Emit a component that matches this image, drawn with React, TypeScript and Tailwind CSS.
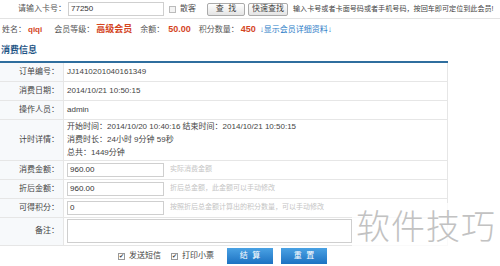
import React from "react";

const font = {
  fontFamily: '"Liberation Sans", "Noto Sans CJK SC", sans-serif',
};

function Row({
  label,
  children,
  h = "h-[19px]",
}: {
  label: string;
  children: React.ReactNode;
  h?: string;
}) {
  return (
    <div className={`flex border-b border-[#e6e6e6] ${h}`}>
      <div className="w-[64px] shrink-0 flex items-center justify-end pr-[4px] bg-[#f7f9fb] border-r border-[#e6e6e6] text-[#444] whitespace-nowrap">
        {label}
      </div>
      <div className="flex-1 flex items-center pl-[3px] text-[#444] whitespace-nowrap">
        {children}
      </div>
    </div>
  );
}

function Field({ value, hint }: { value: string; hint: string }) {
  return (
    <>
      <div className="w-[97px] h-[14px] border border-[#cfcfcf] bg-white flex items-center px-[2px] text-[#333]">
        {value}
      </div>
      <span className="ml-[6px] text-[7px] text-[#c4c4c4]">{hint}</span>
    </>
  );
}

export default function App() {
  return (
    <div
      className="relative w-[500px] h-[266px] bg-white overflow-hidden text-[8px]"
      style={font}
    >
      {/* search bar */}
      <div className="flex items-center h-[19px] border-b border-[#e3e3e3] pl-[18px] whitespace-nowrap">
        <span className="shrink-0 text-[#555]">请输入卡号：</span>
        <div className="shrink-0 ml-[2px] w-[96px] h-[14px] border border-[#cfcfcf] flex items-center px-[2px] text-[#333]">
          77250
        </div>
        <span className="shrink-0 ml-[5px] w-[7px] h-[7px] border border-[#bbb] bg-[#f3f3f3]" />
        <span className="shrink-0 ml-[4px] text-[#555]">散客</span>
        <button className="shrink-0 ml-[11px] w-[38px] h-[13px] border border-[#aaa] rounded-[2px] bg-gradient-to-b from-white to-[#e4e4e4] text-[#444] text-[8px] leading-none">
          查&nbsp;&nbsp;找
        </button>
        <button className="shrink-0 ml-[3px] w-[40px] h-[13px] border border-[#aaa] rounded-[2px] bg-gradient-to-b from-white to-[#e4e4e4] text-[#444] text-[8px] leading-none">
          快速查找
        </button>
        <span className="shrink-0 ml-[5px] text-[7.1px] text-[#444]">
          输入卡号或者卡面号码或者手机号码，按回车即可定位到此会员!
        </span>
      </div>

      {/* member info */}
      <div className="flex items-center h-[21px] pl-[2px] text-[#555] whitespace-nowrap">
        <span>姓名：</span>
        <span className="ml-[2px] font-bold text-[#d4461f]">qiqi</span>
        <span className="ml-[12px]">会员等级：</span>
        <span className="ml-[2px] font-bold text-[9px] text-[#d4461f]">高级会员</span>
        <span className="ml-[8px]">余额：</span>
        <span className="ml-[4px] font-bold text-[9px] text-[#d4461f]">50.00</span>
        <span className="ml-[8px]">积分数量：</span>
        <span className="ml-[2px] font-bold text-[9px] text-[#d4461f]">450</span>
        <span className="ml-[4px] text-[#2a7cc7]">↓显示会员详细资料↓</span>
      </div>

      {/* section header */}
      <div className="w-[448px] pl-[1px] pt-[4px] pb-[3px] text-[9px] font-bold text-[#1f5585] border-b-2 border-[#2f6e9e]">
        消费信息
      </div>

      <div className="w-[448px] border-r border-[#e6e6e6]">
        <Row label="订单编号：">JJ1410201040161349</Row>
        <Row label="消费日期：">2014/10/21 10:50:15</Row>
        <Row label="操作人员：">admin</Row>
        <Row label="计时详情：" h="h-[41px]">
          <div className="flex flex-col gap-[4px] leading-[9px]">
            <span>
              开始时间：2014/10/20 10:40:16 结束时间：2014/10/21 10:50:15
            </span>
            <span>消费时长：24小时 9分钟 59秒</span>
            <span>总共：1449分钟</span>
          </div>
        </Row>
        <Row label="消费金额：">
          <Field value="960.00" hint="实际消费金额" />
        </Row>
        <Row label="折后金额：">
          <Field value="960.00" hint="折后总金额，此金额可以手动修改" />
        </Row>
        <Row label="可得积分：">
          <Field value="0" hint="按照折后总金额计算出的积分数量，可以手动修改" />
        </Row>
        <Row label="备注：" h="h-[28px]">
          <div className="w-[285px] h-[24px] border border-[#cfcfcf] bg-white" />
        </Row>
      </div>

      {/* actions */}
      <div className="flex items-center h-[21px] pl-[118px] text-[#444] whitespace-nowrap">
        <span className="w-[7px] h-[7px] border border-[#999] bg-white flex items-center justify-center text-[6px] leading-none">
          ✔
        </span>
        <span className="ml-[4px]">发送短信</span>
        <span className="ml-[10px] w-[7px] h-[7px] border border-[#999] bg-white flex items-center justify-center text-[6px] leading-none">
          ✔
        </span>
        <span className="ml-[4px]">打印小票</span>
        <button className="ml-[13px] w-[46px] h-[16px] bg-gradient-to-b from-[#4aa2e4] to-[#1b72c2] text-white text-[8px] leading-none">
          结&nbsp;&nbsp;算
        </button>
        <button className="ml-[8px] w-[46px] h-[16px] bg-gradient-to-b from-[#4aa2e4] to-[#1b72c2] text-white text-[8px] leading-none">
          重&nbsp;&nbsp;置
        </button>
      </div>

      {/* watermark */}
      <div className="absolute left-[352px] top-[203px] w-[148px] h-[44px] bg-white/80 flex items-center justify-center">
        <span
          className="text-[34px] text-[#c2c2c2] tracking-[1px] leading-none"
          style={{ fontFamily: '"Noto Sans CJK SC", sans-serif', fontWeight: 300 }}
        >
          软件技巧
        </span>
      </div>
    </div>
  );
}
